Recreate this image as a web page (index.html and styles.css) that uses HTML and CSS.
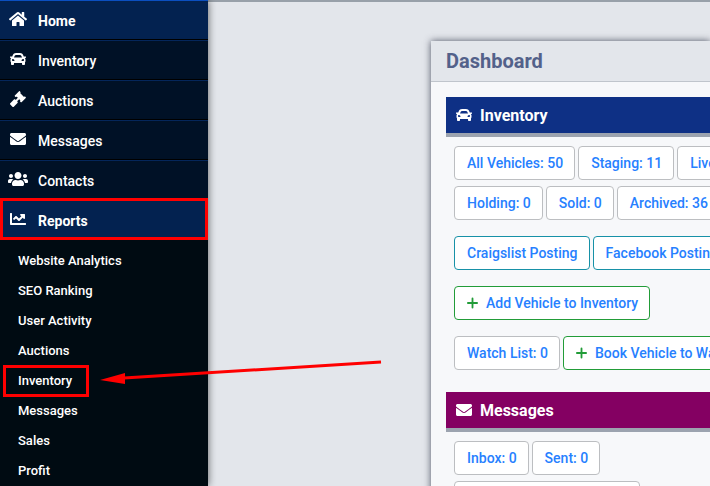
FILE: index.html
```html
<!DOCTYPE html>
<html lang="en">
<head>
    <meta charset="UTF-8">
    <meta name="viewport" content="width=device-width, initial-scale=1.0">
    <title>Dashboard</title>
    <link rel="stylesheet" href="styles.css">
</head>
<body>
    <!-- Shared icons -->
    <svg class="icon-defs" aria-hidden="true">
        <symbol id="icon-car" viewBox="0 0 512 512">
            <path fill-rule="evenodd" d="M499.990 176h-59.870l-16.640-41.600C406.380 91.630 365.570 64 319.500 64h-127c-46.060 0-86.880 27.630-103.990 70.400L71.870 176H12.010C4.200 176-1.530 183.340.370 190.910l6 24C7.700 220.250 12.500 224 18.010 224h20.070C24.650 235.730 16 252.780 16 272v48c0 16.120 6.160 30.670 16 41.930V416c0 17.670 14.330 32 32 32h32c17.670 0 32-14.330 32-32v-32h256v32c0 17.670 14.330 32 32 32h32c17.670 0 32-14.330 32-32v-54.070c9.840-11.250 16-25.800 16-41.930v-48c0-19.220-8.650-36.270-22.070-48H494c5.510 0 10.310-3.750 11.640-9.090l6-24c1.890-7.570-3.840-14.910-11.650-14.910zm-352.060-17.830c7.290-18.220 24.940-30.170 44.570-30.170h127c19.630 0 37.280 11.950 44.570 30.170L384 208H128l19.930-49.830zM96 319.800c-19.200 0-32-12.760-32-31.900S76.800 256 96 256s48 28.710 48 47.850-28.800 15.950-48 15.950zm320 0c-19.200 0-48 3.190-48-15.950S396.800 256 416 256s32 12.760 32 31.900-12.800 31.900-32 31.900z"/>
        </symbol>
        <symbol id="icon-envelope" viewBox="0 0 512 512">
            <path d="M502.300 190.800c3.900-3.100 9.700-.2 9.700 4.700V400c0 26.500-21.500 48-48 48H48c-26.500 0-48-21.500-48-48V195.600c0-5 5.700-7.800 9.700-4.700 22.400 17.400 52.100 39.500 154.100 113.600 21.100 15.400 56.700 47.800 92.200 47.600 35.700.3 72-32.800 92.300-47.600 102-74.100 131.600-96.300 154-113.700zM256 320c23.200.4 56.600-29.200 73.400-41.400 132.700-96.300 142.800-104.700 173.400-128.700 5.800-4.500 9.200-11.500 9.200-18.900v-19c0-26.500-21.500-48-48-48H48c-26.500 0-48 21.500-48 48v19c0 7.400 3.400 14.300 9.200 18.900 30.600 23.900 40.700 32.400 173.400 128.700 16.800 12.200 50.200 41.800 73.400 41.400z"/>
        </symbol>
        <symbol id="icon-plus" viewBox="0 0 12 12">
            <path d="M6 1v10M1 6h10" fill="none" stroke="currentColor" stroke-width="2" stroke-linecap="round"/>
        </symbol>
    </svg>

    <div class="layout">
        <nav class="sidebar">
            <ul class="menu">
                <li><a class="active" href="#">
                    <svg class="menu-icon wide" viewBox="0 0 576 512"><path d="M280.370 148.260L96 300.110V464a16 16 0 0 0 16 16l112.060-.29a16 16 0 0 0 15.920-16V368a16 16 0 0 1 16-16h64a16 16 0 0 1 16 16v95.640a16 16 0 0 0 16 16.050L464 480a16 16 0 0 0 16-16V300L295.670 148.260a12.190 12.190 0 0 0-15.300 0zM571.600 251.470L488 182.560V44.050a12 12 0 0 0-12-12h-56a12 12 0 0 0-12 12v72.610L318.470 43a48 48 0 0 0-61 0L4.340 251.470a12 12 0 0 0-1.600 16.900l25.500 31A12 12 0 0 0 45.150 301l235.220-193.740a12.190 12.190 0 0 1 15.300 0L530.900 301a12 12 0 0 0 16.900-1.600l25.500-31a12 12 0 0 0-1.700-16.930z"/></svg>
                    Home</a></li>
                <li><a href="#"><svg class="menu-icon"><use href="#icon-car"/></svg> Inventory</a></li>
                <li><a href="#">
                    <svg class="menu-icon" viewBox="0 0 512 512"><path d="M504.970 199.360l-22.630-22.620c-6.240-6.240-16.380-6.240-22.620 0l-11.310 11.310-124.460-124.460 11.310-11.310c6.250-6.250 6.250-16.380 0-22.630L312.640 7.030c-6.250-6.250-16.380-6.250-22.630 0L154.250 142.780c-6.250 6.250-6.250 16.380 0 22.630l22.620 22.620c6.250 6.250 16.380 6.250 22.630 0l11.310-11.310 39.600 39.600-67.880 67.880-11.310-11.310c-12.500-12.500-32.760-12.500-45.250 0L9.370 389.490c-12.500 12.500-12.500 32.760 0 45.250l67.890 67.890c12.490 12.490 32.750 12.490 45.250 0l116.600-116.600c12.500-12.500 12.500-32.760 0-45.250l-11.310-11.310 67.880-67.880 39.600 39.600-11.310 11.310c-6.250 6.250-6.250 16.380 0 22.630l22.620 22.620c6.250 6.250 16.380 6.250 22.630 0l135.750-135.760c6.250-6.240 6.250-16.370 0-22.630z"/></svg>
                    Auctions</a></li>
                <li><a href="#"><svg class="menu-icon"><use href="#icon-envelope"/></svg> Messages</a></li>
                <li><a href="#">
                    <svg class="menu-icon wide" viewBox="0 0 640 512"><path d="M96 224c35.300 0 64-28.700 64-64s-28.700-64-64-64-64 28.700-64 64 28.700 64 64 64zm448 0c35.300 0 64-28.700 64-64s-28.700-64-64-64-64 28.700-64 64 28.700 64 64 64zm32 32h-64c-17.600 0-33.500 7.100-45.100 18.600 40.300 22.100 68.900 62 75.100 109.400h66c17.700 0 32-14.300 32-32v-32c0-35.300-28.700-64-64-64zm-256 0c61.900 0 112-50.100 112-112S381.900 32 320 32 208 82.100 208 144s50.100 112 112 112zm76.800 32h-8.300c-20.800 10-43.900 16-68.500 16s-47.600-6-68.500-16h-8.300C179.600 288 128 339.600 128 403.200V432c0 26.500 21.500 48 48 48h288c26.500 0 48-21.500 48-48v-28.800c0-63.600-51.600-115.200-115.200-115.200zm-223.700-13.400C161.500 263.100 145.600 256 128 256H64c-35.300 0-64 28.700-64 64v32c0 17.700 14.300 32 32 32h65.900c6.300-47.400 34.900-87.300 75.200-109.400z"/></svg>
                    Contacts</a></li>
                <li class="boxed"><a class="active" href="#">
                    <svg class="menu-icon" viewBox="0 0 512 512"><path d="M496 384H64V80c0-8.840-7.160-16-16-16H16C7.160 64 0 71.160 0 80v336c0 17.670 14.330 32 32 32h464c8.840 0 16-7.160 16-16v-32c0-8.840-7.160-16-16-16zM464 96H345.940c-21.380 0-32.090 25.850-16.970 40.970l32.400 32.400L288 242.750l-73.370-73.370c-12.500-12.500-32.760-12.500-45.250 0l-68.690 68.690c-6.250 6.250-6.250 16.380 0 22.630l22.620 22.620c6.250 6.250 16.380 6.250 22.630 0L192 237.250l73.370 73.370c12.500 12.500 32.760 12.500 45.250 0l96-96 32.400 32.400c15.120 15.120 40.970 4.410 40.970-16.970V112c.01-8.840-7.150-16-15.990-16z"/></svg>
                    Reports</a></li>
            </ul>
            <ul class="submenu">
                <li><a href="#">Website Analytics</a></li>
                <li><a href="#">SEO Ranking</a></li>
                <li><a href="#">User Activity</a></li>
                <li><a href="#">Auctions</a></li>
                <li><a class="boxed-link" href="#">Inventory</a></li>
                <li><a href="#">Messages</a></li>
                <li><a href="#">Sales</a></li>
                <li><a href="#">Profit</a></li>
            </ul>
        </nav>

        <main class="content">
            <section class="panel">
                <h1>Dashboard</h1>
                <div class="panel-body">
                    <h2><svg class="title-icon"><use href="#icon-car"/></svg> Inventory</h2>
                    <div class="buttons">
                        <div class="row">
                            <button type="button">All Vehicles: 50</button>
                            <button type="button">Staging: 11</button>
                            <button type="button">Live: 39</button>
                        </div>
                        <div class="row">
                            <button type="button">Holding: 0</button>
                            <button type="button">Sold: 0</button>
                            <button type="button">Archived: 36</button>
                        </div>
                        <div class="row spaced">
                            <button type="button" class="info">Craigslist Posting</button>
                            <button type="button" class="info">Facebook Posting</button>
                        </div>
                        <div class="row spaced">
                            <button type="button" class="add"><svg class="plus"><use href="#icon-plus"/></svg>Add Vehicle to Inventory</button>
                        </div>
                        <div class="row spaced">
                            <button type="button">Watch List: 0</button>
                            <button type="button" class="add"><svg class="plus"><use href="#icon-plus"/></svg>Book Vehicle to Watch List</button>
                        </div>
                    </div>

                    <h2 class="messages"><svg class="title-icon"><use href="#icon-envelope"/></svg> Messages</h2>
                    <div class="buttons">
                        <div class="row">
                            <button type="button">Inbox: 0</button>
                            <button type="button">Sent: 0</button>
                        </div>
                        <div class="row">
                            <button type="button">Send Message to Contact</button>
                        </div>
                    </div>
                </div>
            </section>
        </main>
    </div>

    <!-- Pointer to the Inventory report -->
    <svg class="arrow" viewBox="0 0 284 26" aria-hidden="true">
        <path d="M24 18L281 2" stroke="#f00" stroke-width="3"/>
        <path d="M0 20L25 13V24z" fill="#f00"/>
    </svg>
</body>
</html>
```

FILE: styles.css
```css
* {
    box-sizing: border-box;
}

body {
    margin: 0;
    height: 100vh;
    overflow: hidden;
    position: relative;
    font-family: Roboto, "Liberation Sans", sans-serif;
    font-size: 14px;
    background-color: #e3e6eb;
}

ul {
    list-style: none;
    margin: 0;
    padding: 0;
}

svg {
    fill: currentColor;
    flex-shrink: 0;
}

.icon-defs {
    position: absolute;
    width: 0;
    height: 0;
}

.layout {
    display: flex;
    height: 100%;
}

/* Sidebar */
.sidebar {
    flex: 0 0 208px;
    position: relative;
    z-index: 1;
    background-color: #000b12;
    box-shadow: 0 0 8px rgba(0, 0, 0, 0.6);
}

.menu a {
    display: flex;
    align-items: center;
    gap: 12px;
    height: 40px;
    padding: 2px 10px 0 10px;
    border-top: 1px solid #04265a;
    border-bottom: 1px solid #000;
    background-color: #001126;
    color: #fff;
    font-weight: 500;
    text-decoration: none;
}

.menu a.active {
    background-color: #032250;
    font-weight: 700;
}

.menu li:first-child a {
    border-top-color: #0b4fc0;
}

.menu-icon {
    width: 16px;
    height: 16px;
    margin-bottom: 4px;
}

.menu-icon.wide {
    width: 20px;
    margin-left: -2px;
    margin-right: -2px;
}

.boxed,
.boxed-link {
    position: relative;
}

/* Red highlight boxes */
.boxed::after,
.boxed-link::after {
    content: "";
    position: absolute;
    border: 3px solid #f00;
    pointer-events: none;
}

.boxed::after {
    inset: -2px 0 0 0;
}

.boxed-link::after {
    inset: -1px -17px -1px -15px;
}

.submenu {
    padding: 6px 18px 0;
}

.submenu a {
    display: inline-block;
    height: 30px;
    line-height: 30px;
    color: #fff;
    font-size: 13px;
    font-weight: 500;
    text-decoration: none;
    vertical-align: top;
}

/* Dashboard */
.content {
    flex: 1;
    min-width: 0;
    padding: 39px 0 0 223px;
    border-top: 2px solid #98a0a9;
}

.panel {
    background-color: #f7f8fa;
    box-shadow: 0 0 7px rgba(40, 45, 65, 0.8);
}

.panel h1 {
    margin: 0;
    padding: 0 15px;
    border-bottom: 1px solid #c0c5cc;
    background-color: #e3e6eb;
    color: #53618a;
    font-size: 20px;
    line-height: 40px;
}

.panel-body {
    padding: 15px 0 15px 15px;
}

.panel h2 {
    display: flex;
    align-items: center;
    gap: 8px;
    height: 40px;
    margin: 0;
    padding: 0 10px;
    border-bottom: 4px solid #9ca3af;
    background-color: #0e3085;
    color: #fff;
    font-size: 16px;
}

.panel h2.messages {
    background-color: #840062;
}

.title-icon {
    width: 16px;
    height: 16px;
}

.buttons {
    display: flex;
    flex-direction: column;
    gap: 6px;
    padding: 9px 0 22px 8px;
}

.row {
    display: flex;
    gap: 3px;
}

.row.spaced {
    margin-top: 10px;
}

button {
    display: flex;
    align-items: center;
    flex-shrink: 0;
    height: 34px;
    padding: 0 11px 1px 12px;
    border: 1px solid #bcbec1;
    border-radius: 4px;
    background-color: #fff;
    color: #2680ff;
    font-family: inherit;
    font-size: 14px;
    font-weight: 500;
    white-space: nowrap;
    cursor: pointer;
}

button.info {
    border-color: #1791a7;
}

button.add {
    border-color: #229c38;
}

.plus {
    width: 11px;
    height: 12px;
    margin-right: 8px;
    color: #229c38;
}

.arrow {
    position: absolute;
    z-index: 2;
    top: 360px;
    left: 100px;
    width: 284px;
    height: 26px;
}
```
